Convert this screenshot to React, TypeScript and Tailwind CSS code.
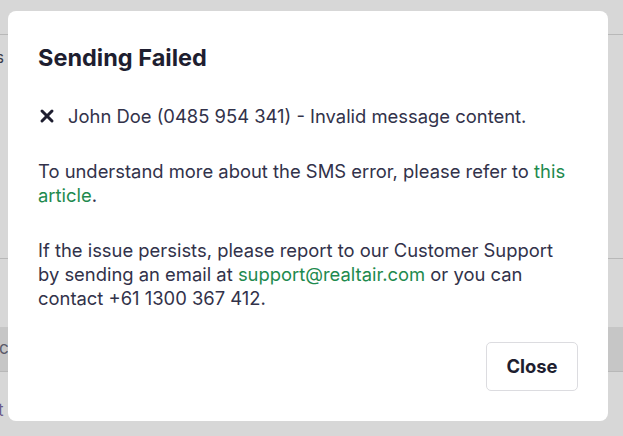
import { X } from 'lucide-react';

function Backdrop() {
  return (
    <div className="flex h-[436px] w-[623px] flex-col bg-[#d7d7d7] text-[#3a3a4a]">
      <div className="h-[35px] border-b border-[#b8b8b8]" />
      <div className="h-[224px] border-b border-[#b8b8b8] pt-[12px] text-[15px]">
        <span className="-ml-[4px]">s</span>
      </div>
      <div className="h-[68px]" />
      <div className="flex h-[45px] items-center border-b border-[#b8b8b8] bg-[#c6c6c6] text-[17px] text-[#5a5a6a]">
        <span className="-ml-[1px]">c</span>
      </div>
      <div className="pt-[26px] text-[17px] text-[#6a5a8a]">
        <span className="-ml-[2px]">t</span>
      </div>
    </div>
  );
}

export default function App() {
  return (
    <div className="relative h-[436px] w-[623px] overflow-hidden font-['Inter',sans-serif]">
      <Backdrop />
      <div className="absolute left-[8px] top-[11px] flex h-[410px] w-[600px] flex-col rounded-[8px] bg-white px-[30px] pt-[32px] text-[#32324a]">
        <h2 className="text-[23.5px] font-bold leading-[30px] text-[#1e1e30]">Sending Failed</h2>
        <div className="mt-[31px] flex items-center gap-[11px] text-[18.4px] leading-[24px]">
          <X className="-ml-[1px] h-[20px] w-[20px] text-[#1e1e30]" strokeWidth={3.6} />
          <span>John Doe (0485 954 341) - Invalid message content.</span>
        </div>
        <p className="mt-[31px] text-[18.4px] leading-[24px]">
          To understand more about the SMS error, please refer to{' '}
          <a className="text-[#1e8a4e]">this article</a>.
        </p>
        <p className="mt-[31px] text-[18.4px] leading-[24px]">
          If the issue persists, please report to our Customer Support by sending an email at{' '}
          <a className="text-[#1e8a4e]">support@realtair.com</a> or you can contact +61 1300 367 412.
        </p>
        <div className="mt-auto mb-[30px] flex justify-end">
          <button className="h-[49px] w-[92px] rounded-[5px] border border-[#dcdce0] text-[18.4px] font-bold text-[#1e1e30]">
            Close
          </button>
        </div>
      </div>
    </div>
  );
}
